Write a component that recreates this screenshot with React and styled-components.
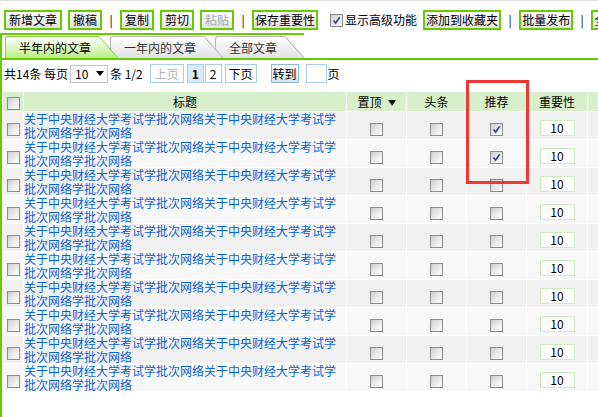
import React from "react";
import styled, { createGlobalStyle } from "styled-components";

const Global = createGlobalStyle`
  html, body { margin: 0; padding: 0; background: #fff; overflow: hidden; }
  body {
    font-family: "SimSun", "Noto Sans CJK SC", sans-serif;
    font-size: 12px;
    color: #000;
  }
`;

const GREEN = "#66cc00";

const Page = styled.div`
  position: relative;
  width: 598px;
  height: 417px;
  overflow: hidden;
  box-sizing: border-box;
  border-top: 1px solid #e2e2e2;
`;

/* ---------- toolbar ---------- */
const Toolbar = styled.div`
  display: flex;
  align-items: center;
  gap: 6px;
  padding: 9px 0 0 4px;
  height: 20px;
  white-space: nowrap;
`;

const ToolButton = styled.span`
  flex-shrink: 0;
  display: inline-block;
  height: 20px;
  box-sizing: border-box;
  border: 2px solid ${GREEN};
  padding: 0 ${(p) => (p.$tight ? 1 : 3)}px;
  line-height: 16px;
  background: linear-gradient(to bottom, #ffffff, #e2e2e2);
  color: ${(p) => (p.$disabled ? "#a8a8a8" : "#000")};
`;

const Sep = styled.span`
  flex-shrink: 0;
  width: 6px;
  text-align: center;
  line-height: 20px;
`;

const CheckLabel = styled.label`
  flex-shrink: 0;
  display: flex;
  align-items: center;
  gap: 2px;
  margin-left: 6px;
  line-height: 20px;
`;

/* ---------- checkbox ---------- */
const Box = styled.span`
  display: inline-block;
  position: relative;
  width: 13px;
  height: 13px;
  box-sizing: border-box;
  border: 1px solid #8c8c8c;
  background: linear-gradient(135deg, #cacbcd 0%, #e9e9ea 50%, #ffffff 100%);
  vertical-align: middle;
  & > svg { position: absolute; left: 0; top: 0; }
`;

function Check({ checked }) {
  return (
    <Box>
      {checked && (
        <svg width="11" height="11" viewBox="0 0 11 11">
          <path d="M2.5 5.5 L4.6 8 L8.8 2.2" fill="none" stroke="#31479b" strokeWidth="1.7" />
        </svg>
      )}
    </Box>
  );
}

/* ---------- panel & tabs ---------- */
const Panel = styled.div`
  margin-top: 3px;
  border-left: 2px solid ${GREEN};
  height: 400px;
  overflow: hidden;
`;

const TabStrip = styled.div`
  display: flex;
  width: fit-content;
  border-top: 2px solid ${GREEN};
  padding: 1px 0 0 3px;
`;

const TabWrap = styled.div`
  position: relative;
  z-index: ${(p) => p.$z};
  display: flex;
  height: 22px;
  margin-left: ${(p) => (p.$first ? 0 : -8)}px;
`;

const TabBody = styled.div`
  height: 22px;
  box-sizing: border-box;
  padding: 0 8px 0 13px;
  line-height: 21px;
  white-space: nowrap;
  border-top: 1px solid ${(p) => (p.$active ? "#7fcf40" : "#b8b8b8")};
  border-left: 1px solid ${(p) => (p.$active ? "#7fcf40" : "#b8b8b8")};
  border-top-left-radius: 3px;
  background: linear-gradient(to bottom, #ffffff, ${(p) => (p.$active ? "#bdef86" : "#e2e2e2")});
  color: ${(p) => (p.$active ? "#000" : "#333")};
`;

function Tab({ label, active, z, first }) {
  const id = `tabg${z}`;
  const end = active ? "#bdef86" : "#e2e2e2";
  const line = active ? "#7fcf40" : "#b0b0b0";
  return (
    <TabWrap $z={z} $first={first}>
      <TabBody $active={active}>{label}</TabBody>
      <svg width="19" height="22" viewBox="0 0 19 22">
        <defs>
          <linearGradient id={id} x1="0" y1="0" x2="0" y2="1">
            <stop offset="0" stopColor="#ffffff" />
            <stop offset="1" stopColor={end} />
          </linearGradient>
        </defs>
        <polygon points="0,0 19,22 0,22" fill={`url(#${id})`} />
        <line x1="0" y1="0.5" x2="19" y2="22" stroke={line} strokeWidth="1" />
        {!active && <line x1="1.5" y1="0.5" x2="19" y2="20.5" stroke="#e6e6e6" strokeWidth="1" />}
      </svg>
    </TabWrap>
  );
}

const TabLine = styled.div`
  height: 2px;
  background: ${GREEN};
`;

/* ---------- pager ---------- */
const Pager = styled.div`
  display: flex;
  align-items: center;
  height: 19px;
  margin-top: 4px;
  padding-left: 2px;
  white-space: nowrap;
`;

const PagerText = styled.span`
  margin-left: ${(p) => p.$ml || 0}px;
  line-height: 19px;
`;

const SelectBox = styled.span`
  display: inline-flex;
  align-items: center;
  justify-content: space-between;
  width: 38px;
  height: 18px;
  box-sizing: border-box;
  margin-left: 2px;
  padding: 0 3px 0 4px;
  border: 1px solid #c4c4c4;
  background: #fff;
`;

const PageBtn = styled.span`
  display: inline-block;
  height: 19px;
  box-sizing: border-box;
  margin-left: ${(p) => p.$ml}px;
  padding: 0 ${(p) => p.$pad}px;
  border: 1px solid #a9cdee;
  line-height: 17px;
  background: ${(p) => (p.$current ? "#dbe9f9" : "#fff")};
  color: ${(p) => (p.$disabled ? "#b2b2b2" : "#000")};
  font-weight: ${(p) => (p.$current ? "bold" : "normal")};
`;

const GoBtn = styled.span`
  display: inline-block;
  height: 19px;
  box-sizing: border-box;
  margin-left: 14px;
  padding: 0 1px;
  border: 1px solid #92b6db;
  line-height: 17px;
  background: linear-gradient(to bottom, #fbfcfe, #d9e2ec);
`;

const PageInput = styled.span`
  display: inline-block;
  width: 21px;
  height: 19px;
  box-sizing: border-box;
  margin-left: 7px;
  border: 1px solid #a9cdee;
  background: #fff;
`;

/* ---------- table ---------- */
const Table = styled.table`
  margin-top: 8px;
  table-layout: fixed;
  width: 647px;
  border-collapse: separate;
  border-spacing: 1px;
  font-size: 12px;
`;

const Th = styled.th`
  height: 19px;
  padding: 0;
  font-weight: normal;
  text-align: center;
  line-height: 19px;
  background: #d8efcb;
`;

const Tr = styled.tr`
  background: ${(p) => (p.$odd ? "#f1f1f1" : "#f8f8f8")};
`;

const Td = styled.td`
  height: 27px;
  padding: 0;
  vertical-align: top;
`;

const CenterTd = styled.td`
  height: 27px;
  padding: 4px 0 0;
  box-sizing: border-box;
  text-align: center;
  vertical-align: middle;
`;

const TitleLink = styled.a`
  display: block;
  color: #0863d4;
  text-decoration: none;
  line-height: 13.5px;
`;

const WeightInput = styled.span`
  display: inline-block;
  width: 35px;
  height: 16px;
  box-sizing: border-box;
  border: 1px solid #cde9bf;
  background: #fff;
  line-height: 14px;
  text-align: center;
`;

const SortArrow = styled.svg`
  margin-left: 6px;
  vertical-align: 1px;
`;

const Highlight = styled.div`
  position: absolute;
  left: 466px;
  top: 79px;
  width: 63px;
  height: 104px;
  box-sizing: border-box;
  border: 3px solid #ee3838;
  pointer-events: none;
`;

const TITLE = "关于中央财经大学考试学批次网络关于中央财经大学考试学批次网络学批次网络";

const rows = Array.from({ length: 10 }, (_, i) => ({ id: i, recommend: i < 2 }));

export default function App() {
  return (
    <>
      <Global />
      <Page>
        <Toolbar>
          <ToolButton>新增文章</ToolButton>
          <ToolButton>撤稿</ToolButton>
          <Sep>|</Sep>
          <ToolButton>复制</ToolButton>
          <ToolButton>剪切</ToolButton>
          <ToolButton $disabled>粘贴</ToolButton>
          <Sep>|</Sep>
          <ToolButton $tight>保存重要性</ToolButton>
          <CheckLabel>
            <Check checked />
            显示高级功能
          </CheckLabel>
          <ToolButton $tight>添加到收藏夹</ToolButton>
          <Sep>|</Sep>
          <ToolButton $tight>批量发布</ToolButton>
          <Sep>|</Sep>
          <ToolButton $tight>全部选择</ToolButton>
        </Toolbar>

        <Panel>
          <TabStrip>
            <Tab label="半年内的文章" active z={3} first />
            <Tab label="一年内的文章" z={2} />
            <Tab label="全部文章" z={1} />
          </TabStrip>
          <TabLine />

          <Pager>
            <PagerText>共14条 每页</PagerText>
            <SelectBox>
              <span>10</span>
              <svg width="8" height="5" viewBox="0 0 8 5">
                <polygon points="0,0 8,0 4,5" fill="#000" />
              </svg>
            </SelectBox>
            <PagerText $ml={2}>条 1/2</PagerText>
            <PageBtn $ml={7} $pad={4} $disabled>上页</PageBtn>
            <PageBtn $ml={3} $pad={4} $current>1</PageBtn>
            <PageBtn $ml={1} $pad={4}>2</PageBtn>
            <PageBtn $ml={3} $pad={3}>下页</PageBtn>
            <GoBtn>转到</GoBtn>
            <PageInput />
            <PagerText $ml={1}>页</PagerText>
          </Pager>

          <Table>
            <colgroup>
              <col style={{ width: 20 }} />
              <col style={{ width: 322 }} />
              <col style={{ width: 59 }} />
              <col style={{ width: 59 }} />
              <col style={{ width: 59 }} />
              <col style={{ width: 60 }} />
              <col style={{ width: 60 }} />
            </colgroup>
            <thead>
              <tr>
                <Th><Check /></Th>
                <Th>标题</Th>
                <Th>
                  置顶
                  <SortArrow width="8" height="6" viewBox="0 0 8 6">
                    <polygon points="0,0 8,0 4,6" fill="#111" />
                    <line x1="0.5" y1="0.5" x2="4" y2="5.5" stroke="#b08a3a" strokeWidth="0.8" />
                  </SortArrow>
                </Th>
                <Th>头条</Th>
                <Th>推荐</Th>
                <Th>重要性</Th>
                <Th />
              </tr>
            </thead>
            <tbody>
              {rows.map((r) => (
                <Tr key={r.id} $odd={r.id % 2 === 0}>
                  <CenterTd><Check /></CenterTd>
                  <Td><TitleLink href="#">{TITLE}</TitleLink></Td>
                  <CenterTd><Check /></CenterTd>
                  <CenterTd><Check /></CenterTd>
                  <CenterTd><Check checked={r.recommend} /></CenterTd>
                  <CenterTd><WeightInput>10</WeightInput></CenterTd>
                  <Td />
                </Tr>
              ))}
            </tbody>
          </Table>
        </Panel>
        <Highlight />
      </Page>
    </>
  );
}
